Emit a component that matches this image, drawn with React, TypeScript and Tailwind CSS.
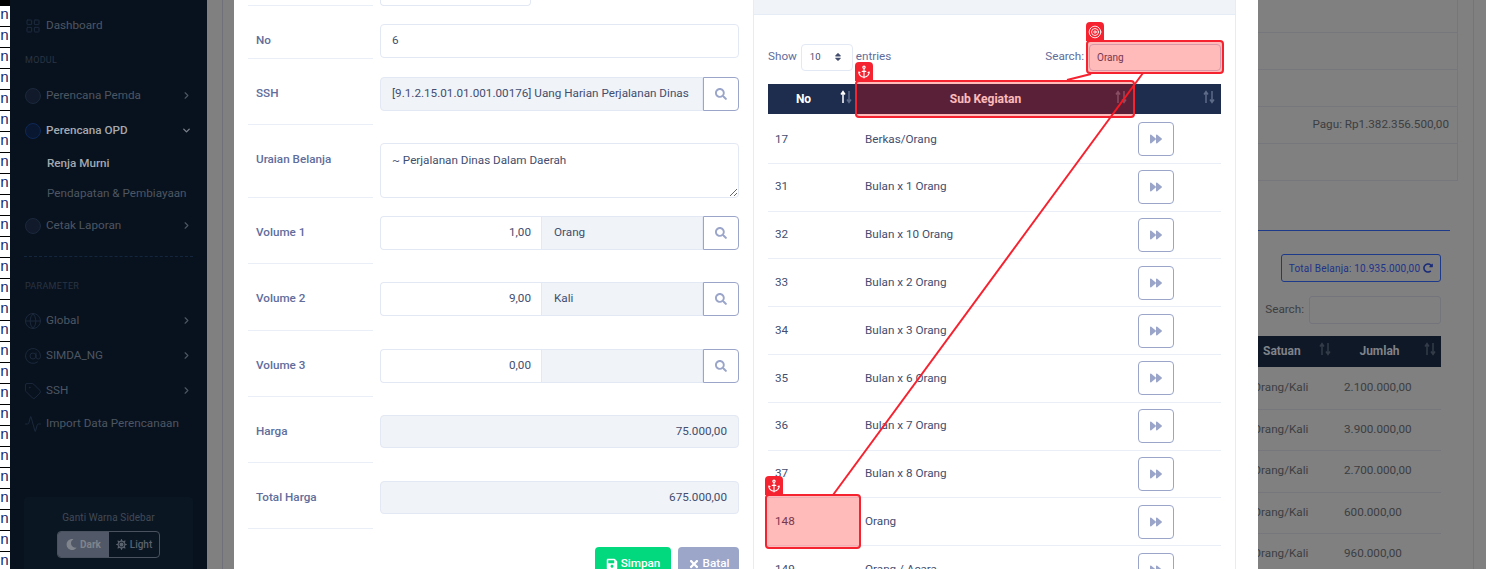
import { Activity, Anchor, AtSign, ChevronDown, ChevronRight, Circle, Globe, LayoutGrid, Tag, Target } from 'lucide-react'
import { FaForward, FaMoon, FaRedoAlt, FaSave, FaSearch, FaSort, FaSun, FaTimes } from 'react-icons/fa'
import type { ReactNode } from 'react'

const subRows = [
  ['17', 'Berkas/Orang'],
  ['31', 'Bulan x 1 Orang'],
  ['32', 'Bulan x 10 Orang'],
  ['33', 'Bulan x 2 Orang'],
  ['34', 'Bulan x 3 Orang'],
  ['35', 'Bulan x 6 Orang'],
  ['36', 'Bulan x 7 Orang'],
  ['37', 'Bulan x 8 Orang'],
  ['148', 'Orang'],
  ['149', 'Orang / Acara'],
]

const jumlahRows = ['2.100.000,00', '3.900.000,00', '2.700.000,00', '600.000,00', '960.000,00']

function SortIcon({ up = '#5d6a88', down = '#5d6a88' }: { up?: string; down?: string }) {
  return (
    <svg width="12" height="14" viewBox="0 0 12 14" fill="none" strokeWidth="1.5" className="-mt-1 shrink-0">
      <path d="M3 13V2M1 4.5L3 1.5L5 4.5" stroke={up} />
      <path d="M9 1V12M7 9.5L9 12.5L11 9.5" stroke={down} />
    </svg>
  )
}

function MenuItem({ icon, label, arrow, active }: { icon: ReactNode; label: string; arrow?: boolean; active?: boolean }) {
  return (
    <div className="flex items-center h-[35px] w-[168px]">
      <span className="w-[21px] flex justify-start shrink-0">{icon}</span>
      <span className={active ? 'text-[11.7px] font-medium text-[#a4a9af]' : 'text-[11.7px] text-[#4d5662]'}>{label}</span>
      {arrow && <ChevronRight size={11} color="#4d5662" strokeWidth={2.5} className="ml-auto mr-[1px]" />}
      {active && <ChevronDown size={11} color="#7b818a" strokeWidth={3} className="ml-auto mr-[1px]" />}
    </div>
  )
}

function Sidebar() {
  const ic = 'w-[18px] h-[18px] -ml-[1.5px] text-[#1d2a3e]'
  return (
    <aside className="w-[197px] shrink-0 h-full bg-[#08121e] flex flex-col pl-[15px] pt-[8px]">
      <MenuItem icon={<LayoutGrid className="w-[16px] h-[16px] -ml-[0.5px] text-[#1d2a3e]" strokeWidth={1.5} />} label="Dashboard" />
      <div className="h-[35px] flex items-center text-[9px] tracking-[0.3px] text-[#2a3442]">MODUL</div>
      <MenuItem icon={<Circle className={ic} fill="#101a2b" strokeWidth={1.2} />} label="Perencana Pemda" arrow />
      <MenuItem icon={<Circle className="w-[18px] h-[18px] -ml-[1.5px] text-[#0f2a5c]" fill="#0a1730" strokeWidth={1.2} />} label="Perencana OPD" active />
      <div className="h-[30px] mt-[1px] flex items-center pl-[22px] text-[11.7px] font-medium text-[#a4a9af]">Renja Murni</div>
      <div className="h-[29px] flex items-center pl-[22px] text-[11.7px] text-[#4d5662]">Pendapatan &amp; Pembiayaan</div>
      <MenuItem icon={<Circle className={ic} fill="#101a2b" strokeWidth={1.2} />} label="Cetak Laporan" arrow />
      <div className="w-[169px] -ml-[1px] mt-[13px] border-t border-dashed border-[#14263d]" />
      <div className="h-[46px] pt-[23px] text-[9px] leading-[13px] tracking-[0.3px] text-[#2a3442]">PARAMETER</div>
      <MenuItem icon={<Globe className={ic} strokeWidth={1.2} />} label="Global" arrow />
      <MenuItem icon={<AtSign className={ic} strokeWidth={1.2} />} label="SIMDA_NG" arrow />
      <MenuItem icon={<Tag className={ic} strokeWidth={1.2} />} label="SSH" arrow />
      <div className="-mt-[2px]">
        <MenuItem icon={<Activity className={ic} strokeWidth={1.2} />} label="Import Data Perencanaan" />
      </div>
      <div className="mt-auto -ml-[1px] w-[169px] h-[72px] rounded-t-[4px] bg-[#0b1623] flex flex-col items-center pt-[15px]">
        <p className="text-[10px] leading-[12px] tracking-[0.1px] text-[#414a56]">Ganti Warna Sidebar</p>
        <div className="mt-[7px] flex h-[27px] w-[103px] rounded-[4px] border border-[#4a5260] overflow-hidden text-[10px] font-bold">
          <span className="w-[51px] bg-[#515867] text-[#80848c] flex items-center justify-center gap-[3px]">
            <FaMoon size={11} /> Dark
          </span>
          <span className="flex-1 text-[#5a626e] font-medium flex items-center justify-center gap-[3px]">
            <FaSun size={11} /> Light
          </span>
        </div>
      </div>
    </aside>
  )
}

function SearchBtn() {
  return (
    <button className="w-[36px] h-full shrink-0 bg-white border border-[#9aa5c9] rounded-r-[4px] flex items-center justify-center">
      <FaSearch size={12} color="#9aa5c9" />
    </button>
  )
}

function FormRow({ label, height, children }: { label: string; height: string; children: ReactNode }) {
  return (
    <div className={`flex ${height}`}>
      <div className="w-[125px] shrink-0 border-b border-[#e9eef7] pl-[8px] pt-[27px] text-[11.7px] leading-[14px] font-medium text-[#616d9c]">
        {label}
      </div>
      <div className="ml-[7px] flex-1 pt-[18px]">{children}</div>
    </div>
  )
}

function VolumeGroup({ value, unit }: { value: string; unit: string }) {
  return (
    <div className="flex h-[34px] text-[11.7px] text-[#434e6e]">
      <div className="w-[161px] bg-white border border-[#e2e8f4] border-r-0 rounded-l-[4px] flex items-center justify-end pr-[10px]">{value}</div>
      <div className="flex-1 bg-[#f0f3f8] border border-[#e2e8f4] flex items-center pl-[12px]">{unit}</div>
      <SearchBtn />
    </div>
  )
}

function FormPane() {
  const box = 'border border-[#e2e8f4] rounded-[4px] flex items-center text-[11.7px] text-[#434e6e] px-[11px]'
  return (
    <div className="w-[491px] shrink-0">
      <div className="flex h-[6px]">
        <div className="w-[125px] border-b border-[#e9eef7]" />
        <div className="ml-[7px] w-[151px] border border-t-0 border-[#e2e8f4] rounded-b-[4px]" />
      </div>
      <FormRow label="No" height="h-[53px]">
        <div className={`${box} h-[34px] bg-white`}>6</div>
      </FormRow>
      <FormRow label="SSH" height="h-[66px]">
        <div className="flex h-[34px] text-[11.7px] text-[#434e6e]">
          <div className="flex-1 bg-[#f0f3f8] border border-[#e2e8f4] rounded-l-[4px] flex items-center pl-[11px] whitespace-nowrap overflow-hidden">
            [9.1.2.15.01.01.001.00176] Uang Harian Perjalanan Dinas
          </div>
          <SearchBtn />
        </div>
      </FormRow>
      <FormRow label="Uraian Belanja" height="h-[73px]">
        <textarea
          readOnly
          value="~ Perjalanan Dinas Dalam Daerah"
          className="block w-full h-[55px] border border-[#e2e8f4] rounded-[4px] px-[11px] py-[9px] text-[11.7px] leading-[14px] text-[#434e6e] outline-none"
        />
      </FormRow>
      <FormRow label="Volume 1" height="h-[66px]">
        <VolumeGroup value="1,00" unit="Orang" />
      </FormRow>
      <FormRow label="Volume 2" height="h-[67px]">
        <VolumeGroup value="9,00" unit="Kali" />
      </FormRow>
      <FormRow label="Volume 3" height="h-[66px]">
        <VolumeGroup value="0,00" unit="" />
      </FormRow>
      <FormRow label="Harga" height="h-[66px]">
        <div className={`${box} h-[33px] bg-[#f0f3f8] justify-end`}>75.000,00</div>
      </FormRow>
      <FormRow label="Total Harga" height="h-[66px]">
        <div className={`${box} h-[33px] bg-[#f0f3f8] justify-end`}>675.000,00</div>
      </FormRow>
      <div className="flex justify-end gap-[7px] pt-[18px]">
        <button className="w-[76px] h-[33px] rounded-[4px] bg-[#02d97f] text-white text-[11.7px] font-medium flex items-center justify-center gap-[3px]">
          <FaSave size={12} /> Simpan
        </button>
        <button className="w-[61px] h-[33px] rounded-[4px] bg-[#9ca6c9] text-white text-[11.7px] font-medium flex items-center justify-center gap-[3px]">
          <FaTimes size={12} /> Batal
        </button>
      </div>
    </div>
  )
}

function SubKegiatanPane() {
  return (
    <div className="ml-[14px] w-[483px] shrink-0 border-x border-[#e6ecf5]">
      <div className="h-[15px] bg-[#f0f3f8] border-b border-[#e6ecf5]" />
      <div className="px-[14px]">
        <div className="h-[69px] pt-[29px] flex justify-between text-[11.7px] text-[#616d9c]">
          <div className="flex items-center h-[26px]">
            <span>Show</span>
            <span className="ml-[4px] w-[52px] h-[27px] border border-[#e2e8f4] rounded-[4px] flex items-center justify-between pl-[8px] pr-[9px] text-[9.5px] text-[#434e6e]">
              10 <FaSort size={10} color="#434e6e" />
            </span>
            <span className="ml-[3px]">entries</span>
          </div>
          <div className="flex items-center h-[26px]">
            <span>Search:</span>
            <span className="ml-[5px] w-[132px] h-[27px] border border-[#c9d2e6] rounded-[4px] flex items-center pl-[7px] text-[10px] text-[#434e6e]">Orang</span>
          </div>
        </div>
        <div className="grid grid-cols-[88px_279px_86px] h-[30px] mb-[2px] pb-[1px] bg-[#1e2d4d] text-white text-[12px] font-bold">
          <div className="flex items-center pr-[4px]">
            <span className="flex-1 text-center -ml-[1px]">No</span>
            <SortIcon up="#ffffff" />
          </div>
          <div className="flex items-center pr-[8px]">
            <span className="flex-1 text-center">Sub Kegiatan</span>
            <SortIcon />
          </div>
          <div className="flex items-center justify-end pr-[6px]">
            <SortIcon />
          </div>
        </div>
        {subRows.map(([no, name]) => (
          <div key={no} className="grid grid-cols-[88px_279px_86px] h-[47.8px] items-center border-b border-[#e9eef7] text-[11.7px] text-[#434e6e]">
            <span className="pl-[7px]">{no}</span>
            <span className="pl-[9px]">{name}</span>
            <span className="pl-[3px]">
              <button className="w-[36px] h-[34px] border border-[#9aa5c9] rounded-[4px] flex items-center justify-center">
                <FaForward size={12} color="#9aa5c9" />
              </button>
            </span>
          </div>
        ))}
      </div>
    </div>
  )
}

function Backdrop() {
  const rowLine = 'border-b border-[#76777c]'
  return (
    <div className="flex-1 h-full bg-[#808080] overflow-hidden text-[11.7px] text-[#3c3e42]">
      <div className="w-[216px] h-full border-r border-[#74757c]">
        <div className="w-[200px] border-r border-[#76777c]">
          <div className={`h-[33px] ${rowLine}`} />
          <div className={`h-[37px] ${rowLine}`} />
          <div className={`h-[37px] ${rowLine}`} />
          <div className={`h-[37px] ${rowLine} flex items-center justify-end pr-[8px]`}>Pagu: Rp1.382.356.500,00</div>
          <div className={`h-[37px] ${rowLine}`} />
        </div>
        <div className="w-[192px] mt-[49px] border-b border-[#1d3a8a]" />
        <div className="w-[183px] mt-[23px] flex justify-end">
          <button className="w-[160px] h-[28px] border border-[#1d3a8a] rounded-[3px] flex items-center justify-center gap-[3px] text-[10px] tracking-[0.2px] text-[#20328a]">
            Total Belanja: 10.935.000,00 <FaRedoAlt size={10} color="#1a2b78" />
          </button>
        </div>
        <div className="w-[183px] mt-[14px] flex items-center justify-end h-[28px]">
          <span>Search:</span>
          <span className="ml-[5px] w-[132px] h-[28px] border border-[#74757c] rounded-[3px]" />
        </div>
        <div className="w-[183px] mt-[12px] h-[31px] pb-[1px] grid grid-cols-[79px_104px] bg-[#0f1826] text-[12px] text-[#7f838a] font-bold">
          <div className="flex items-center pr-[6px]">
            <span className="pl-[5px] flex-1">Satuan</span>
            <SortIcon up="#333b48" down="#333b48" />
          </div>
          <div className="flex items-center pr-[5px]">
            <span className="flex-1 text-center -ml-[2px]">Jumlah</span>
            <SortIcon up="#333b48" down="#333b48" />
          </div>
        </div>
        <div className="pt-[1px]">
          {jumlahRows.map((v) => (
            <div key={v} className={`w-[183px] h-[41.5px] grid grid-cols-[79px_104px] items-center ${rowLine}`}>
              <span className="-ml-[5px] whitespace-nowrap">Orang/Kali</span>
              <span className="pl-[7px]">{v}</span>
            </div>
          ))}
        </div>
      </div>
    </div>
  )
}

function Marker({ box, tag, icon }: { box: string; tag: string; icon: ReactNode }) {
  return (
    <>
      <div className={`absolute ${box} border-2 border-[#f5222f] rounded-[4px] bg-[rgba(255,0,0,0.27)]`} />
      <div className={`absolute ${tag} w-[18px] h-[19px] bg-[#f5222f] rounded-t-[4px] flex items-center justify-center text-white`}>{icon}</div>
    </>
  )
}

export default function App() {
  return (
    <div className="relative w-[1486px] h-[569px] flex overflow-hidden bg-white font-['Roboto',sans-serif]">
      <div className="w-[10px] h-full shrink-0 bg-white overflow-hidden">
        <div className="h-[6px] bg-black" />
        {Array.from({ length: 27 }, (_, i) => (
          <div key={i} className="h-[21px] border-b border-black flex justify-end pr-[1px] overflow-hidden text-[15px] leading-[20px] text-[#1b2a6b] font-['Liberation_Mono',monospace]">
            <span className="shrink-0 whitespace-nowrap">en</span>
          </div>
        ))}
      </div>
      <Sidebar />
      <div className="w-[27px] h-full shrink-0 bg-[#808080] pl-[15px]">
        <div className="h-full w-px bg-[#6f7079]" />
      </div>
      <div className="w-[1024px] h-full shrink-0 bg-white flex pl-[14px] overflow-hidden">
        <FormPane />
        <SubKegiatanPane />
      </div>
      <Backdrop />

      <svg className="absolute left-0 top-0 pointer-events-none" width="1486" height="569">
        <path d="M1067 80 L1091 74" stroke="#f5222f" strokeWidth="2" fill="none" />
        <path d="M1143 73 L833 495" stroke="#f5222f" strokeWidth="2" fill="none" />
      </svg>
      <Marker box="left-[1086px] top-[40px] w-[138px] h-[34px]" tag="left-[1086px] top-[22px]" icon={<Target size={14} strokeWidth={1.5} />} />
      <Marker box="left-[855px] top-[80px] w-[280px] h-[38px]" tag="left-[855px] top-[62px]" icon={<Anchor size={14} strokeWidth={2} />} />
      <Marker box="left-[765px] top-[494px] w-[96px] h-[55px]" tag="left-[765px] top-[476px]" icon={<Anchor size={14} strokeWidth={2} />} />
    </div>
  )
}
